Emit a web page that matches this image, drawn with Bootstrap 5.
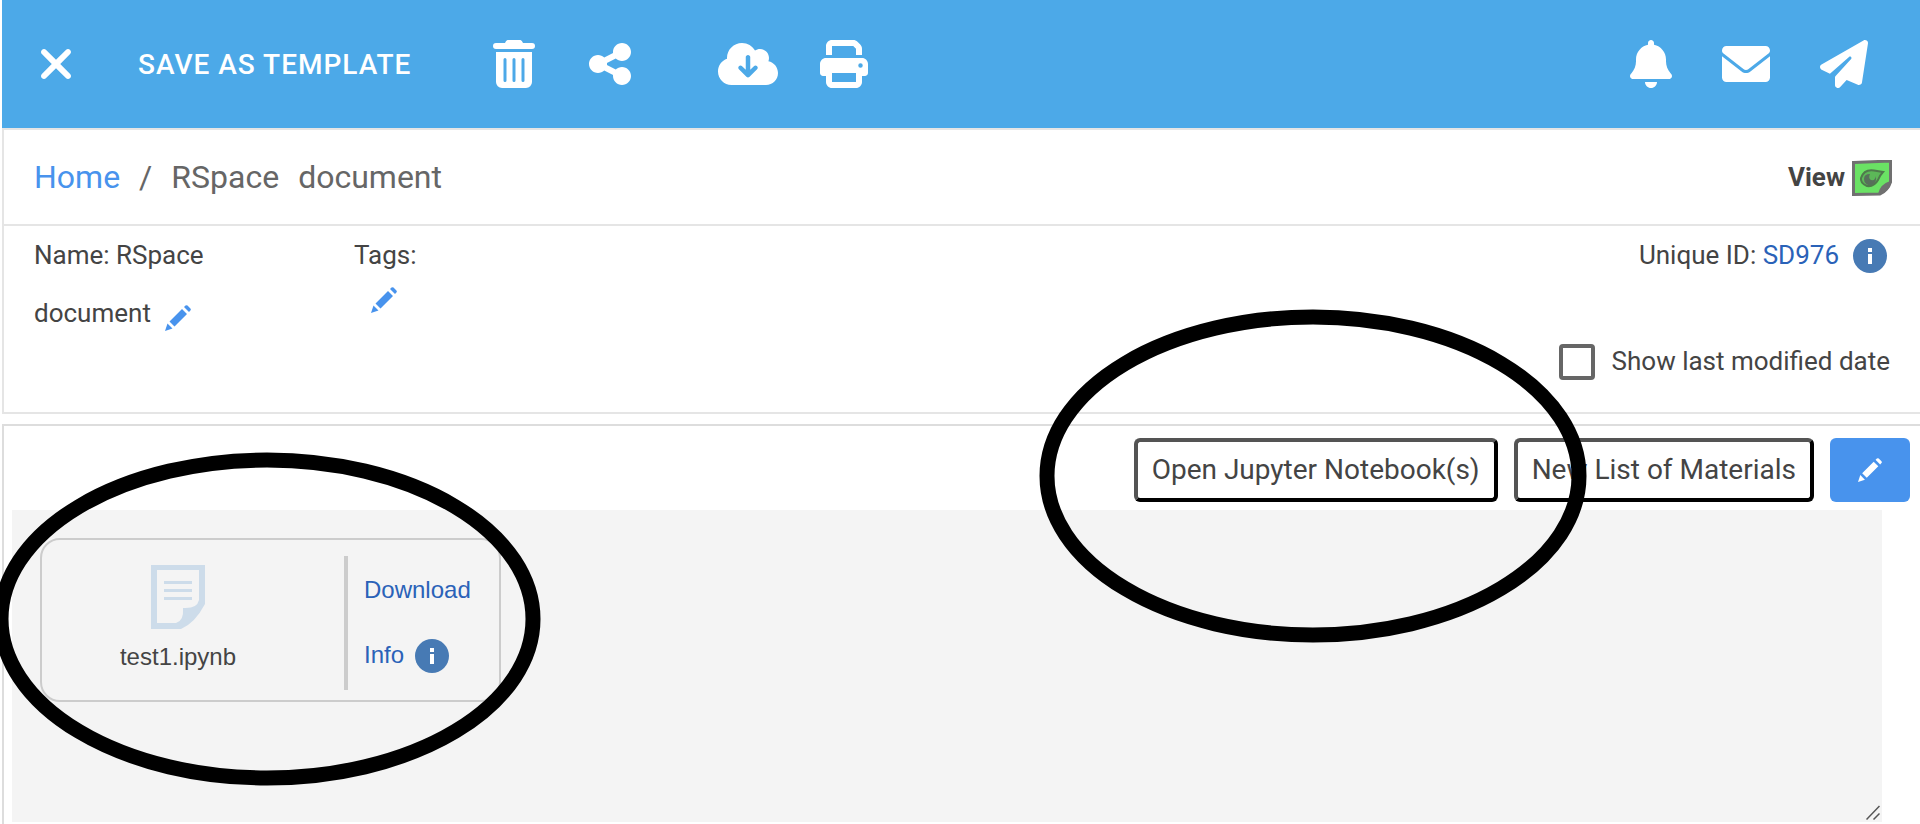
<!DOCTYPE html>
<html lang="en">
<head>
<meta charset="utf-8">
<meta name="viewport" content="width=device-width, initial-scale=1">
<title>RSpace document</title>
<link href="https://cdn.jsdelivr.net/npm/bootstrap@5.3.0/dist/css/bootstrap.min.css" rel="stylesheet">
<style>
body { font-family: Roboto, "Noto Sans", sans-serif; font-size: 26px; line-height: 1.2; color: #444; background: #fff; }
a { color: #2a62b8; text-decoration: none; }
.page-wrap { padding-left: 2px; min-height: 100vh; }
.app-bar { background: #4ca9e8; color: #fff; height: 128px; padding: 0 52px 0 39px; }
.app-bar svg { height: 48px; display: block; fill: currentColor; }
.app-bar .btn { color: #fff; --bs-btn-hover-color: #fff; border: 0; padding: 0; border-radius: 0; }
.app-bar .btn-template { font-size: 28px; font-weight: 500; letter-spacing: 1px; line-height: 32px; padding: 2px 82px 0 67px; }
.actions-main { gap: 54px; }
.actions-file { gap: 42px; margin-left: 87px; }
.actions-user { gap: 50px; }
.sheet { border: 2px solid #e5e5e5; border-right: 0; }
.crumbs { height: 96px; padding: 0 28px 0 30px; border-bottom: 2px solid #e5e5e5; font-size: 32px; }
.crumbs a { color: #4893ed; }
.crumbs .breadcrumb { color: #666; gap: 19px; }
.view-label { font-size: 26px; font-weight: 700; gap: 7px; padding-top: 2px; }
.meta { min-height: 186px; padding: 0 30px; }
.doc-name { width: 220px; margin-right: 100px; line-height: 58px; }
.icon-btn { border: 0; padding: 6px 0 0; background: none; color: #4893ed; line-height: 1; }
.doc-name .icon-btn { margin-left: 8px; }
.tag-box .icon-btn { padding-top: 3px; margin-left: 17px; }
.icon-btn svg, .btn-edit svg, .tip-btn svg { display: block; fill: currentColor; }
.tag-box { line-height: 58px; }
.tip-btn { border: 0; padding: 0; background: none; }
.meta-row { height: 60px; gap: 14px; padding-right: 3px; }
.date-row { margin-top: 58px; gap: 17px; }
.date-row .form-check-input { width: 36px; height: 36px; margin: 0; border: 4px solid #666; border-radius: 4px; }
.editor { border: 2px solid #ddd; border-right: 0; border-bottom: 0; margin-top: 10px; padding: 0 10px 2px 8px; }
.tool-row { padding: 12px 0 8px; gap: 16px; }
.tool-row .btn-old { height: 64px; border: 4px outset #000; border-radius: 6px; background: #fff; color: #444; font-size: 28px; padding: 0 14px; }
.btn-edit { width: 80px; height: 64px; border: 0; border-radius: 6px; background: #4893ed; color: #fff; }
.text-area { background: #f4f4f4; height: 312px; margin-right: 28px; padding: 28px; }
.attachment { width: 461px; height: 164px; border: 2px solid #ccc; border-radius: 20px; padding: 16px 0 10px; font-family: "Liberation Sans", Arial, sans-serif; font-size: 24px; }
.file-side { width: 302px; padding: 9px 30px 0 0; gap: 14px; }
.link-side { border-left: 4px solid #ccc; padding: 20px 0 0 16px; gap: 34px; }
.info-row { gap: 11px; }
.grip { right: 2px; bottom: 2px; }
.ring { pointer-events: none; fill: none; stroke: #000; stroke-width: 15; }
.ring-tools { right: 333px; top: 309px; }
.ring-file { left: -7px; top: 452px; }
</style>
</head>
<body>
<svg class="d-none" aria-hidden="true">
  <symbol id="pencil" viewBox="0 0 26 26"><path d="M0 26 2.500 18.500 7.500 23.500ZM4.500 16.500 17 4 22 9 9.500 21.500ZM19 2 20.500.6Q21.500-.3 22.500.6L25.400 3.500Q26.300 4.500 25.400 5.500L24 7Z"/></symbol>
  <symbol id="info" viewBox="0 0 34 34"><circle cx="17" cy="17" r="17" fill="#477ab4"/><path fill="#fff" d="M15 9h4v4h-4zM15 15h4v10h-4z"/></symbol>
</svg>
<div class="page-wrap position-relative overflow-hidden">
  <header class="app-bar d-flex align-items-center justify-content-between">
    <div class="d-flex align-items-center">
      <button class="btn" type="button" aria-label="Close"><svg viewBox="0 0 320 512"><path d="M310.600 361.400c12.500 12.500 12.500 32.750 0 45.250C304.400 412.900 296.200 416 288 416s-16.380-3.125-22.620-9.375L160 301.300 54.630 406.600C48.380 412.900 40.190 416 32 416S15.630 412.900 9.375 406.600c-12.500-12.500-12.500-32.750 0-45.250l105.400-105.400L9.375 150.600c-12.500-12.500-12.500-32.750 0-45.250s32.750-12.500 45.250 0L160 210.800l105.400-105.400c12.500-12.500 32.750-12.500 45.250 0s12.500 32.750 0 45.250l-105.400 105.400z"/></svg></button>
      <button class="btn btn-template" type="button">SAVE AS TEMPLATE</button>
      <div class="actions-main d-flex">
        <button class="btn" type="button" aria-label="Delete"><svg viewBox="0 0 448 512"><path fill-rule="evenodd" d="M135.200 17.700C140.600 6.800 151.700 0 163.800 0H284.200c12.100 0 23.200 6.800 28.600 17.700L320 32h96a32 32 0 0 1 0 64H32a32 32 0 0 1 0-64h96zM32 128H416V448a64 64 0 0 1-64 64H96a64 64 0 0 1-64-64zm80 80v224a16 16 0 0 0 32 0V208a16 16 0 0 0-32 0zm96 0v224a16 16 0 0 0 32 0V208a16 16 0 0 0-32 0zm96 0v224a16 16 0 0 0 32 0V208a16 16 0 0 0-32 0z"/></svg></button>
        <button class="btn" type="button" aria-label="Share"><svg viewBox="0 0 448 512"><path d="M352 224c53 0 96-43 96-96s-43-96-96-96s-96 43-96 96c0 4 .2 8 .7 11.900l-94.100 47C145.400 170.200 121.900 160 96 160c-53 0-96 43-96 96s43 96 96 96c25.900 0 49.400-10.200 66.600-26.900l94.100 47c-.5 3.900-.7 7.800-.7 11.900c0 53 43 96 96 96s96-43 96-96s-43-96-96-96c-25.900 0-49.400 10.200-66.600 26.900l-94.100-47c.5-3.900 .7-7.800 .7-11.900s-.2-8-.7-11.900l94.100-47C302.600 213.800 326.100 224 352 224z"/></svg></button>
      </div>
      <div class="actions-file d-flex">
        <button class="btn" type="button" aria-label="Export"><svg viewBox="0 0 640 512"><path d="M144 480C64.500 480 0 415.500 0 336c0-62.800 40.200-116.200 96.200-135.900c-.1-2.700-.2-5.400-.2-8.100c0-88.400 71.600-160 160-160c59.300 0 111 32.200 138.700 80.200C409.900 102 428.300 96 448 96c53 0 96 43 96 96c0 12.200-2.300 23.800-6.400 34.600C596 238.400 640 290.100 640 352c0 70.700-57.300 128-128 128H144zm79-167l80 80c9.400 9.400 24.600 9.400 33.900 0l80-80c9.400-9.400 9.400-24.600 0-33.900s-24.600-9.400-33.900 0l-39 39V184c0-13.300-10.700-24-24-24s-24 10.700-24 24V318.100l-39-39c-9.400-9.400-24.600-9.400-33.900 0s-9.400 24.600 0 33.900z"/></svg></button>
        <button class="btn" type="button" aria-label="Print"><svg viewBox="0 0 512 512"><path d="M128 0C92.700 0 64 28.700 64 64v96h64V64H354.700L384 93.300V160h64V93.300c0-17-6.700-33.300-18.700-45.300L400 18.700C388 6.700 371.700 0 354.700 0H128zM384 352v96H128V352H384zm64 32h32c17.700 0 32-14.300 32-32V256c0-35.300-28.700-64-64-64H64c-35.300 0-64 28.700-64 64v96c0 17.700 14.300 32 32 32H64v64c0 35.300 28.700 64 64 64H384c35.300 0 64-28.700 64-64V384zM432 248a24 24 0 1 1 0 48 24 24 0 1 1 0-48z"/></svg></button>
      </div>
    </div>
    <div class="actions-user d-flex align-items-center">
      <button class="btn" type="button" aria-label="Notifications"><svg viewBox="0 0 448 512"><path d="M224 0c-17.700 0-32 14.300-32 32V51.200C119 66 64 130.600 64 208v18.800c0 47-17.300 92.400-48.500 127.600l-7.400 8.300c-8.400 9.400-10.400 22.900-5.300 34.400S19.400 416 32 416H416c12.600 0 24-7.400 29.200-18.900s3.100-25-5.300-34.400l-7.400-8.300C401.300 319.200 384 273.900 384 226.800V208c0-77.400-55-142-128-156.800V32c0-17.700-14.300-32-32-32zm45.300 493.300c12-12 18.700-28.300 18.700-45.300H160c0 17 6.700 33.300 18.700 45.300s28.300 18.700 45.300 18.700s33.300-6.700 45.300-18.700z"/></svg></button>
      <button class="btn" type="button" aria-label="Messages"><svg viewBox="0 0 512 512"><path d="M256 352c-16.530 0-33.060-5.422-47.160-16.410L0 173.200V400C0 426.500 21.490 448 48 448h416c26.510 0 48-21.490 48-48V173.200l-208.800 162.500C289.100 346.600 272.500 352 256 352zM16.290 145.300l212.200 165.100c16.190 12.600 38.870 12.600 55.060 0l212.200-165.100C505.100 137.300 512 125 512 112C512 85.490 490.500 64 464 64h-416C21.490 64 0 85.490 0 112C0 125 6.010 137.300 16.290 145.300z"/></svg></button>
      <button class="btn" type="button" aria-label="Send"><svg viewBox="0 0 512 512"><path d="M498.100 5.600c10.100 7 15.400 19.100 13.500 31.200l-64 416c-1.500 9.700-7.400 18.200-16 23s-18.900 5.400-28 1.600L284 427.700l-68.500 74.100c-8.900 9.700-22.900 12.900-35.200 8.100S160 493.200 160 480V396.400c0-4 1.500-7.800 4.200-10.700L331.800 202.800c5.800-6.300 5.600-16-.4-22s-15.700-6.400-22-.7L106 360.800 17.700 316.600C7.100 311.300 .3 300.700 0 288.900s5.900-22.800 16.100-28.700l448-256c10.700-6.100 23.900-5.500 34 1.400z"/></svg></button>
    </div>
  </header>

  <section class="sheet">
    <nav class="crumbs d-flex align-items-center justify-content-between" aria-label="Breadcrumb">
      <div class="breadcrumb mb-0"><a href="#">Home</a><span>/</span><span>RSpace</span><span>document</span></div>
      <div class="view-label d-flex align-items-center">View
        <svg width="40" height="36" viewBox="0 0 40 36"><path d="M1.500 2.500 38.500 1V22Q36 30 28 34L1.500 34.500Z" fill="#6ae264" stroke="#707070" stroke-width="3"/><path d="M27 34Q29 25 38.500 22Q36 31 27 34" fill="#707070" stroke="#707070" stroke-width="2"/><path d="M9 18Q12 9 22 10.500L31 12Q28 15 26 20Q22 27 15 26Q8 23 9 18" fill="#5cb858" stroke="#4f7a4c" stroke-width="2"/><path d="M12 19a6 6 0 1 0 11-3Q24 21 19 20Q16 18 18 14Q12 14 12 19" fill="#57705a"/></svg>
      </div>
    </nav>
    <div class="meta d-flex">
      <div class="doc-name">Name: RSpace<br>document <button class="icon-btn align-middle" type="button" aria-label="Rename"><svg width="26" height="26"><use href="#pencil"/></svg></button></div>
      <div class="tag-box">Tags:<button class="icon-btn d-block" type="button" aria-label="Edit tags"><svg width="26" height="26"><use href="#pencil"/></svg></button></div>
      <div class="ms-auto">
        <div class="meta-row d-flex align-items-center justify-content-end"><span>Unique ID: <a href="#">SD976</a></span><button class="tip-btn" type="button" aria-label="About this ID"><svg width="34" height="34"><use href="#info"/></svg></button></div>
        <div class="date-row d-flex align-items-center"><input class="form-check-input" type="checkbox" id="showDate"><label for="showDate">Show last modified date</label></div>
      </div>
    </div>
  </section>

  <main class="editor">
    <div class="tool-row d-flex justify-content-end">
      <button class="btn-old" type="button">Open Jupyter Notebook(s)</button>
      <button class="btn-old" type="button">New List of Materials</button>
      <button class="btn-edit d-flex align-items-center justify-content-center" type="button" aria-label="Edit"><svg width="24" height="24"><use href="#pencil"/></svg></button>
    </div>
    <div class="text-area position-relative">
      <div class="attachment d-flex">
        <div class="file-side d-flex flex-column align-items-center">
          <svg width="54" height="64" viewBox="0 0 54 64"><path fill="#cddcea" fill-rule="evenodd" d="M0 0H54V39Q44 58 30 64H0ZM6 5V58H25Q33 56 32 43Q46 44 48 35V5Z"/><path d="M13 17.500H41M13 25.500H41M13 33.500H41" stroke="#cddcea" stroke-width="3"/></svg>
          <span>test1.ipynb</span>
        </div>
        <div class="link-side d-flex flex-column align-items-start">
          <a href="#">Download</a>
          <div class="info-row d-flex align-items-center"><a href="#">Info</a><button class="tip-btn" type="button" aria-label="File info"><svg width="34" height="34"><use href="#info"/></svg></button></div>
        </div>
      </div>
      <svg class="grip position-absolute" width="14" height="15" viewBox="0 0 14 15"><path d="M.5 14.500 13.500 1M7.500 14.500 13.500 8.500" stroke="#555" stroke-width="1.500" fill="none"/></svg>
    </div>
  </main>

  <svg class="ring ring-tools position-absolute" width="548" height="334"><ellipse cx="274" cy="167" rx="266" ry="159"/></svg>
  <svg class="ring ring-file position-absolute" width="548" height="334"><ellipse cx="274" cy="167" rx="266" ry="159"/></svg>
</div>
<script src="https://cdn.jsdelivr.net/npm/bootstrap@5.3.0/dist/js/bootstrap.bundle.min.js"></script>
</body>
</html>
